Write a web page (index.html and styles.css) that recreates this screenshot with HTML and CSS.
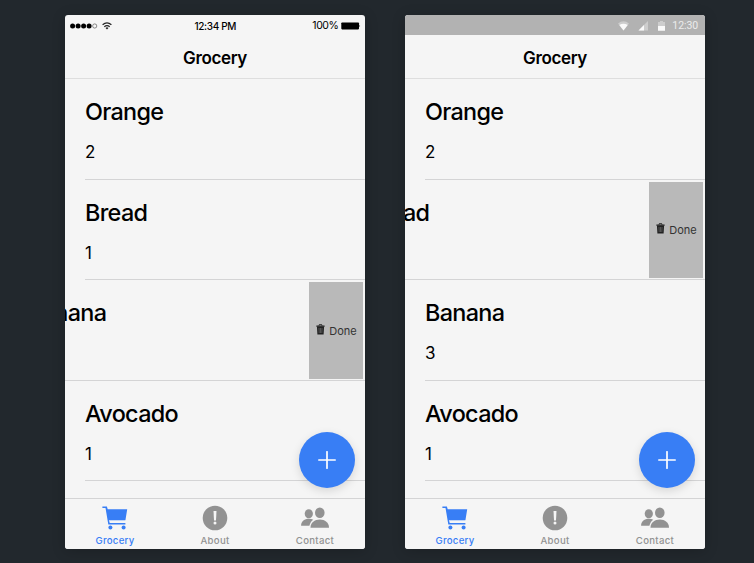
FILE: index.html
```html
<!DOCTYPE html>
<html lang="en">
<head>
<meta charset="utf-8">
<title>Grocery</title>
<link rel="stylesheet" href="styles.css">
</head>
<body>
<svg class="defs" aria-hidden="true">
  <symbol id="cart" viewBox="0 0 26 24">
    <path d="M.4.4h4.500l.8 2.900h19.500l-1.900 11.700H7.200l.5 2.100h15.700v1.500H6.300L3.500 1.900H.4z"/>
    <path class="shelf" d="M7 14.600h17"/>
    <circle cx="8.400" cy="21.400" r="2"/><circle cx="21.600" cy="21.400" r="2"/>
  </symbol>
  <symbol id="alert" viewBox="0 0 26 26">
    <circle cx="13" cy="13" r="12.3"/>
    <path class="mark" d="M11.5 6h3l-.5 9.400h-2z"/>
    <circle class="mark" cx="13" cy="18" r="1.5"/>
  </symbol>
  <symbol id="people" viewBox="0 0 28 22">
    <ellipse cx="7.800" cy="6.700" rx="4.100" ry="4.500"/>
    <path d="M.1 18.800c0-4.800 3.600-7 7.700-7 1.800 0 3.300.4 4.500 1-2 1.300-3.300 3.400-3.900 6z"/>
    <ellipse cx="18.800" cy="5.800" rx="4.800" ry="5.300"/>
    <path d="M9.500 20.800c0-5.200 4.200-8.200 9.300-8.200s9.200 3 9.200 8.200z"/>
  </symbol>
  <symbol id="trash" viewBox="0 0 9 11">
    <path d="M.4 1.400h2.200L3.100.3h2.800l.5 1.100h2.200v1.300H.4zM3.300 1.400h2.400l-.2-.5h-2z"/>
    <path d="M.9 2.500h7.200l-.5 8H1.400z"/>
    <path class="ribs" d="M3 4l.2 5M4.500 4v5M6 4l-.2 5"/>
  </symbol>
</svg>
<main class="stage">
  <section class="phone">
    <div class="status ios">
      <div class="signal">
        <svg width="28" height="6" viewBox="0 0 28 6"><circle cx="2.600" cy="3" r="2.500"/><circle cx="8.100" cy="3" r="2.500"/><circle cx="13.600" cy="3" r="2.500"/><circle cx="19.100" cy="3" r="2.500"/><circle class="empty" cx="24.700" cy="3" r="2.100"/></svg>
        <svg class="wifi" width="10" height="8" viewBox="0 0 10 8"><path d="M.6 2.800Q5-1 9.400 2.800M2.300 4.700q2.700-2.300 5.400 0"/><path class="dot" d="M3.500 5.900q1.500-1.200 3 0L5 7.500z"/></svg>
      </div>
      <div class="clock">12:34 PM</div>
      <div class="power">100%<svg width="20" height="8" viewBox="0 0 20 8"><rect x=".3" y=".4" width="17.700" height="7" rx=".8"/><path d="M18.500 2.500q1.300 1.400 0 2.800z"/></svg></div>
    </div>
    <header class="title">Grocery</header>
    <div class="list">
      <div class="row"><div class="item"><h2>Orange</h2><p>2</p></div></div>
      <div class="row"><div class="item"><h2>Bread</h2><p>1</p></div></div>
      <div class="row swiped"><div class="item"><h2>Banana</h2><p></p></div><div class="done"><svg><use href="#trash"/></svg>Done</div></div>
      <div class="row"><div class="item"><h2>Avocado</h2><p>1</p></div></div>
    </div>
    <div class="fab"><svg width="18" height="18" viewBox="0 0 18 18"><path d="M9 .8v16.400M.8 9h16.400"/></svg></div>
    <nav class="tabs">
      <div class="tab active"><svg><use href="#cart"/></svg><span>Grocery</span></div>
      <div class="tab"><svg><use href="#alert"/></svg><span>About</span></div>
      <div class="tab"><svg class="wide"><use href="#people"/></svg><span>Contact</span></div>
    </nav>
  </section>
  <section class="phone">
    <div class="status android">
      <svg width="11" height="10" viewBox="0 0 11 10"><path class="dim" d="M0 2.500Q5.500-1.800 11 2.500L5.500 9.500z"/><path d="M1.300 4Q5.500 1.500 9.700 4l-4.200 5.500z"/></svg>
      <svg width="10" height="10" viewBox="0 0 10 10"><path class="dim" d="M10 0v9.500H.5z"/><path d="M6 4v5.500H.5z"/></svg>
      <svg class="cell" width="7" height="10" viewBox="0 0 7 10"><path class="dim" d="M0 1h2V0h3v1h2v4H0z"/><path d="M0 5h7v4.700H0z"/></svg>
      <span>12:30</span>
    </div>
    <header class="title">Grocery</header>
    <div class="list">
      <div class="row"><div class="item"><h2>Orange</h2><p>2</p></div></div>
      <div class="row swiped"><div class="item"><h2>Bread</h2><p></p></div><div class="done"><svg><use href="#trash"/></svg>Done</div></div>
      <div class="row"><div class="item"><h2>Banana</h2><p>3</p></div></div>
      <div class="row"><div class="item"><h2>Avocado</h2><p>1</p></div></div>
    </div>
    <div class="fab"><svg width="18" height="18" viewBox="0 0 18 18"><path d="M9 .8v16.400M.8 9h16.400"/></svg></div>
    <nav class="tabs">
      <div class="tab active"><svg><use href="#cart"/></svg><span>Grocery</span></div>
      <div class="tab"><svg><use href="#alert"/></svg><span>About</span></div>
      <div class="tab"><svg class="wide"><use href="#people"/></svg><span>Contact</span></div>
    </nav>
  </section>
</main>
</body>
</html>
```

FILE: styles.css
```css
* { box-sizing: border-box; }
body { margin: 0; background: #22282d; font-family: Inter, sans-serif; color: #000; }
h2, p { margin: 0; }
.defs { display: block; width: 0; height: 0; }
.stage { display: flex; gap: 40px; height: 563px; padding: 15px 49px 0 65px; overflow: hidden; }
.phone {
  position: relative; display: flex; flex-direction: column;
  width: 300px; height: 533.5px; overflow: hidden;
  background: #f5f5f5; border-radius: 3px; box-shadow: 0 2px 14px rgba(0, 0, 0, .2);
}
.status { flex: none; height: 20px; display: flex; align-items: center; font-size: 10.500px; line-height: 20px; }
.ios { display: grid; grid-template-columns: 1fr auto 1fr; padding: 1px 4px 0 4.500px; font-weight: 500; }
.signal { display: flex; align-items: center; gap: 4.500px; }
.signal .empty { fill: none; stroke: #444; stroke-width: .6; }
.wifi path { fill: none; stroke: #222; stroke-width: 1.200; }
.wifi .dot { fill: #222; stroke: none; }
.clock { font-size: 10px; letter-spacing: -.35px; }
.power { display: flex; align-items: center; justify-content: flex-end; gap: 2.500px; font-weight: 400; letter-spacing: -.4px; }
.android { justify-content: flex-end; padding: 1px 7px 0 0; background: #b2b2b2; color: #ececec; font-family: Roboto, sans-serif; }
.android svg { fill: #fafafa; margin-right: 9px; }
.android .cell { margin-left: 1px; margin-right: 7px; }
.android .dim { fill: #cdcdcd; }
.android span { letter-spacing: -.1px; }
.title { flex: none; height: 44px; line-height: 46px; text-align: center; font-size: 17px; font-weight: 600; letter-spacing: -.35px; border-bottom: 1px solid #dedede; }
.list { flex: 1; min-height: 0; }
.row { height: 100.400px; padding-left: 20px; }
.row:first-child { height: 101px; }
.item { height: 100%; padding-top: 20px; border-bottom: 1px solid #d4d4d5; white-space: nowrap; }
h2 { font-size: 23.400px; font-weight: 500; line-height: 26px; letter-spacing: -.68px; }
p { margin-top: 17px; font-size: 17px; line-height: 20px; }
.swiped { display: flex; padding: 0; border-bottom: 1px solid #d4d4d5; }
.swiped .item { flex: none; width: 282.400px; margin-left: -38px; border: 0; }
.done { display: flex; align-items: center; justify-content: center; gap: 4.500px; width: 53.600px; margin: 2px 0 1px; background: #b9b9b9; color: #333; font-size: 11px; }
.done svg { width: 9px; height: 11px; margin-top: -3px; fill: #222; }
.ribs { fill: none; stroke: #777; stroke-width: .6; }
.fab {
  position: absolute; right: 10px; bottom: 60.200px; width: 56px; height: 56px; border-radius: 50%;
  display: flex; align-items: center; justify-content: center;
  background: #387ef5; box-shadow: 0 3px 10px rgba(0, 0, 0, .13);
}
.fab path { fill: none; stroke: #fff; stroke-width: 1.700; stroke-linecap: round; }
.tabs { flex: none; height: 50.500px; display: flex; border-top: 1px solid #d4d4d5; background: #f5f5f5; }
.tab { flex: 1; display: flex; flex-direction: column; align-items: center; padding-top: 6px; color: #929292; font-size: 9.600px; font-weight: 500; line-height: 14px; letter-spacing: .3px; }
.tab svg { width: 26px; height: 26px; fill: currentColor; }
.tab .wide { width: 28px; }
.tab span { margin-top: 3px; }
.active { color: #387ef5; }
.shelf { fill: none; stroke: #f5f5f5; stroke-width: .8; }
.mark { fill: #f5f5f5; }
```
